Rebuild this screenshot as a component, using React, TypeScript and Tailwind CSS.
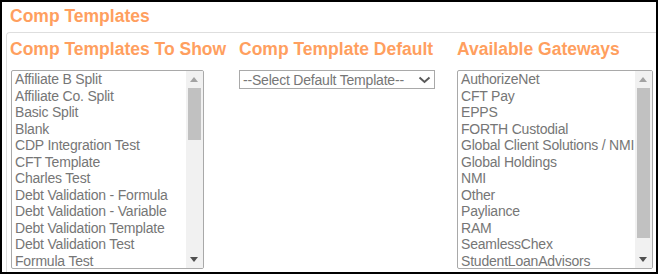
import React from "react";

const templates = [
  "Affiliate B Split",
  "Affiliate Co. Split",
  "Basic Split",
  "Blank",
  "CDP Integration Test",
  "CFT Template",
  "Charles Test",
  "Debt Validation - Formula",
  "Debt Validation - Variable",
  "Debt Validation Template",
  "Debt Validation Test",
  "Formula Test",
];

const gateways = [
  "AuthorizeNet",
  "CFT Pay",
  "EPPS",
  "FORTH Custodial",
  "Global Client Solutions / NMI",
  "Global Holdings",
  "NMI",
  "Other",
  "Payliance",
  "RAM",
  "SeamlessChex",
  "StudentLoanAdvisors",
];

function ScrollBar({ thumbTop, thumbHeight }: { thumbTop: number; thumbHeight: number }) {
  return (
    <div className="relative w-[17px] h-full bg-[#f1f1f1] shrink-0">
      <svg className="absolute left-[4px] top-[6px]" width="8" height="5" viewBox="0 0 8 5">
        <polygon points="0,5 8,5 4,0" fill="#a3a3a3" />
      </svg>
      <div
        className="absolute left-[2px] w-[13px] bg-[#c1c1c1]"
        style={{ top: thumbTop, height: thumbHeight }}
      />
      <svg className="absolute left-[4px] bottom-[6px]" width="8" height="5" viewBox="0 0 8 5">
        <polygon points="0,0 8,0 4,5" fill="#505050" />
      </svg>
    </div>
  );
}

function ListBox({
  items,
  width,
  thumbTop,
  thumbHeight,
}: {
  items: string[];
  width: string;
  thumbTop: number;
  thumbHeight: number;
}) {
  return (
    <div className={`flex h-[199px] border border-[#a9a9a9] rounded-[2px] bg-white overflow-hidden ${width}`}>
      <div className="flex-1 flex flex-col pl-[3px] overflow-hidden">
        {items.map((t) => (
          <div
            key={t}
            className="text-[14px] leading-[16.55px] tracking-[-0.2px] text-[#767676] whitespace-nowrap"
          >
            {t}
          </div>
        ))}
      </div>
      <ScrollBar thumbTop={thumbTop} thumbHeight={thumbHeight} />
    </div>
  );
}

export default function App() {
  return (
    <div
      className="w-[658px] h-[274px] border-2 border-black bg-white overflow-hidden"
      style={{ fontFamily: '"Liberation Sans", Arial, sans-serif' }}
    >
      <div className="pl-[8px] pt-[4px] text-[17.5px] leading-[20px] font-bold text-[#ff9f5f]">
        Comp Templates
      </div>
      <div className="ml-[4px] mt-[6px] w-[700px] h-[300px] border-l border-t border-[#dedede] rounded-tl-[4px] pl-[3px] pt-[6px]">
        <div className="flex">
          <div className="w-[229px] flex flex-col">
            <div className="text-[17.5px] leading-[20px] font-bold text-[#ff9f5f] whitespace-nowrap">
              Comp Templates To Show
            </div>
            <div className="mt-[11px] ml-[1px]">
              <ListBox items={templates} width="w-[193px]" thumbTop={17} thumbHeight={52} />
            </div>
          </div>
          <div className="w-[218px] flex flex-col">
            <div className="text-[17.5px] leading-[20px] font-bold text-[#ff9f5f] whitespace-nowrap">
              Comp Template Default
            </div>
            <div className="mt-[11px] w-[196px] h-[19px] border border-[#a9a9a9] flex items-center justify-between pl-[3px] pr-[3px]">
              <span className="text-[14px] leading-[16px] tracking-[-0.2px] text-[#767676] whitespace-nowrap">
                --Select Default Template--
              </span>
              <svg width="13" height="8" viewBox="0 0 13 8">
                <polyline points="1.5,1.5 6.5,6 11.5,1.5" fill="none" stroke="#5a5a5a" strokeWidth="2" />
              </svg>
            </div>
          </div>
          <div className="flex flex-col">
            <div className="text-[17.5px] leading-[20px] font-bold text-[#ff9f5f] whitespace-nowrap">
              Available Gateways
            </div>
            <div className="mt-[11px]">
              <ListBox items={gateways} width="w-[196px]" thumbTop={17} thumbHeight={150} />
            </div>
          </div>
        </div>
      </div>
    </div>
  );
}
